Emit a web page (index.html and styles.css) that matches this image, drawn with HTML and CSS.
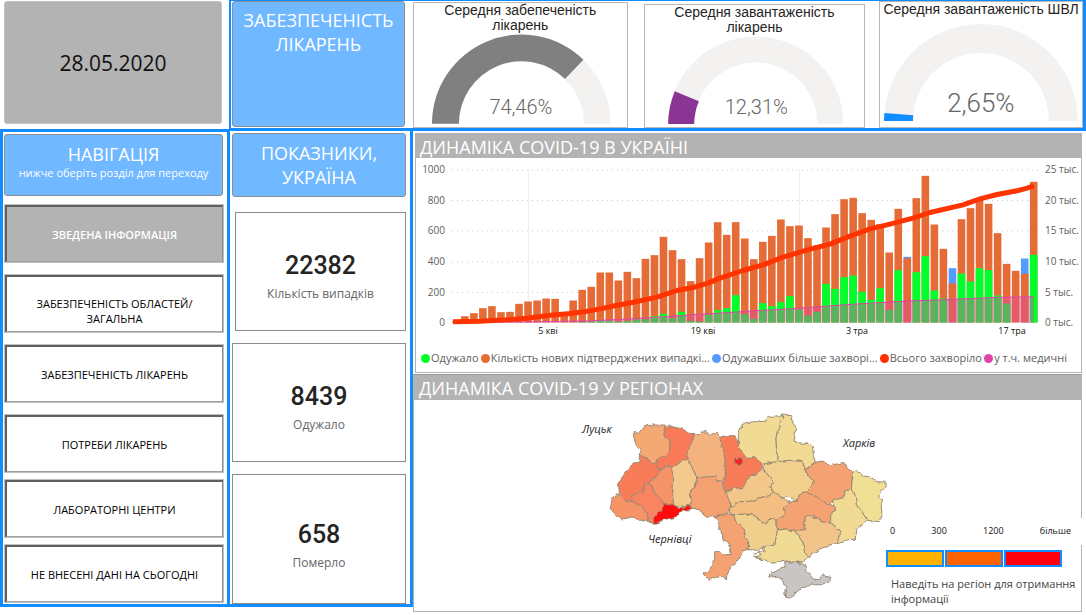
FILE: index.html
```html
<!DOCTYPE html>
<html lang="uk">
<head>
<meta charset="utf-8">
<title>COVID-19 в Україні</title>
<link rel="stylesheet" href="styles.css">
</head>
<body>
<div class="board">
  <div class="side">
    <div class="date">28.05.2020</div>
    <nav class="nav">
      <header class="tile nav-head">
        <h2>НАВІГАЦІЯ</h2>
        <p>нижче оберіть розділ для переходу</p>
      </header>
      <button class="nav-btn active">ЗВЕДЕНА ІНФОРМАЦІЯ</button>
      <button class="nav-btn two-line">ЗАБЕЗПЕЧЕНІСТЬ ОБЛАСТЕЙ/ ЗАГАЛЬНА</button>
      <button class="nav-btn">ЗАБЕЗПЕЧЕНІСТЬ ЛІКАРЕНЬ</button>
      <button class="nav-btn">ПОТРЕБИ ЛІКАРЕНЬ</button>
      <button class="nav-btn tight">ЛАБОРАТОРНІ ЦЕНТРИ</button>
      <button class="nav-btn tight">НЕ ВНЕСЕНІ ДАНІ НА СЬОГОДНІ</button>
    </nav>
  </div>

  <div class="content">
    <section class="supply">
      <h2 class="tile supply-head">ЗАБЕЗПЕЧЕНІСТЬ ЛІКАРЕНЬ</h2>
      <div class="gauges">
        <article class="gauge">
          <h3>Середня забепеченість лікарень</h3>
          <svg viewBox="0 0 213 90">
            <path class="g-track" d="M18 90A89.5 89.5 0 0 1 197 90H170A62.500 62.500 0 0 0 45 90Z"/>
            <path fill="#808080" d="M18 90A89.500 89.500 0 0 1 169.700 25.700L151.200 45.100A62.500 62.500 0 0 0 45 90Z"/>
            <text class="g-value" x="107" y="80">74,46%</text>
          </svg>
        </article>
        <article class="gauge gauge-mid">
          <h3>Середня завантаженість лікарень</h3>
          <svg viewBox="0 0 219 88">
            <path class="g-track" d="M23 88A87.500 87.500 0 0 1 198 88H172A61.500 61.500 0 0 0 49 88Z"/>
            <path fill="#8a3494" d="M23 88A87.500 87.500 0 0 1 29.700 55L53.700 65A61.500 61.500 0 0 0 49 88Z"/>
            <text class="g-value" x="111" y="78">12,31%</text>
          </svg>
        </article>
        <article class="gauge gauge-last">
          <h3>Середня завантаженість ШВЛ</h3>
          <svg viewBox="0 0 202 103">
            <path class="g-track" d="M4 97A97 97 0 0 1 198 97H169A68 68 0 0 0 33 97Z"/>
            <path fill="#118dff" d="M4 97A97 97 0 0 1 4.400 89L33.300 91.400A68 68 0 0 0 33 97Z"/>
            <text class="g-value big" x="101" y="88">2,65%</text>
          </svg>
        </article>
      </div>
    </section>

    <div class="lower">
      <section class="stats">
        <h2 class="tile stats-head">ПОКАЗНИКИ, УКРАЇНА</h2>
        <article class="stat first"><b>22382</b><span>Кількість випадків</span></article>
        <article class="stat"><b>8439</b><span>Одужало</span></article>
        <article class="stat last"><b>658</b><span>Померло</span></article>
      </section>

      <main class="main">
        <section class="panel dynamics">
          <h2>ДИНАМІКА COVID-19 В УКРАЇНІ</h2>
          <svg class="chart" viewBox="416 158 665 185">
            <g class="grid">
              <path d="M452 170H1038M452 200.500H1038M452 231H1038M452 262H1038M452 292.500H1038"/>
            </g>
            <path class="month" d="M528.500 169V322M799.500 169V322"/>
            <g id="bars"></g>
            <path id="area"/>
            <path id="medics"/>
            <path id="total"/>
            <g class="axis left">
              <text x="445" y="173">1000</text><text x="445" y="204">800</text><text x="445" y="234">600</text>
              <text x="445" y="265">400</text><text x="445" y="296">200</text><text x="445" y="326">0</text>
            </g>
            <g class="axis">
              <text x="1045" y="173">25 тыс.</text><text x="1045" y="204">20 тыс.</text><text x="1045" y="234">15 тыс.</text>
              <text x="1045" y="265">10 тыс.</text><text x="1045" y="296">5 тыс.</text><text x="1045" y="326">0 тыс.</text>
            </g>
            <g class="dates">
              <text x="548" y="334">5 кві</text><text x="703" y="334">19 кві</text>
              <text x="857" y="334">3 тра</text><text x="1012" y="334">17 тра</text>
            </g>
          </svg>
          <ul class="legend">
            <li class="k-green">Одужало</li>
            <li class="k-orange">Кількість нових підтверджених випадкі...</li>
            <li class="k-blue">Одужавших більше захворі...</li>
            <li class="k-red">Всього захворіло</li>
            <li class="k-pink">у т.ч. медичні</li>
          </ul>
        </section>

        <section class="panel regions">
          <h2>ДИНАМІКА COVID-19 У РЕГІОНАХ</h2>
          <svg class="map" viewBox="414 399 667 211">
            <defs>
              <filter id="rough" x="-5%" y="-5%" width="110%" height="110%">
                <feTurbulence type="fractalNoise" baseFrequency="0.16" numOctaves="2" seed="4"/>
                <feDisplacementMap in="SourceGraphic" scale="4" xChannelSelector="R" yChannelSelector="G"/>
              </filter>
            </defs>
            <g filter="url(#rough)">
              <g class="oblasts" transform="translate(600 400) scale(.3333)">
                <path fill="#f4a873" d="M100 94L118 97 136 74 168 72 193 72 198 74 190 88 193 104 203 112 210 128 210 145 202 162 188 166 170 178 168 190 150 184 138 170 118 162 120 148 106 128 102 110Z"/>
                <path fill="#f87a58" d="M198 74L245 83 268 98 284 97 278 118 268 135 264 160 264 174 245 180 230 193 216 196 200 196 178 210 172 205 168 190 170 178 188 166 202 162 210 145 210 128 203 112 193 104 190 88Z"/>
                <path fill="#f87c58" d="M118 164L138 170 150 184 168 190 172 205 178 212 165 232 154 238 148 248 132 250 132 274 118 276 98 284 96 302 74 296 58 278 56 244 80 210 104 185 118 184Z"/>
                <path fill="#f69468" d="M50 278L62 284 74 296 96 302 126 316 140 334 144 358 120 358 96 348 68 354 46 340 30 322 36 296Z"/>
                <path fill="#f98560" d="M148 248L156 256 164 276 178 290 194 308 190 322 178 334 162 346 160 370 148 358 144 358 140 334 126 316 96 302 98 284 118 276 132 274 132 250Z"/>
                <path fill="#f69468" d="M178 212L200 196 216 196 218 232 216 270 222 314 194 308 178 290 164 276 156 256 148 248 165 232Z"/>
                <path fill="#f3c98e" d="M216 196L230 193 245 180 264 174 272 190 284 216 290 232 286 258 272 268 272 312 240 320 222 314 216 270 218 232Z"/>
                <path fill="#f4b27f" d="M284 97L298 102 304 94 318 92 332 104 352 96 360 108 364 140 372 152 376 196 376 224 368 240 350 240 348 226 320 228 290 232 284 216 264 174 264 160 268 135 278 118Z"/>
                <path fill="#f5a070" d="M290 232L320 228 348 226 350 240 368 240 370 262 378 270 384 290 392 318 380 338 346 344 320 346 296 326 274 322 272 268 286 258Z"/>
                <path fill="#f87c58" d="M362 108L376 104 402 104 412 118 418 140 432 158 442 172 468 170 488 185 484 205 470 222 450 224 436 250 428 260 400 262 376 268 370 250 376 224 376 196 372 152 364 140Z"/>
                <path fill="#f0da94" d="M416 140L415 100 425 75 434 66 464 62 480 62 498 60 500 44 520 46 542 44 550 52 538 70 542 80 532 92 528 112 530 150 538 165 532 182 496 188 488 190 468 170 442 172 432 158Z"/>
                <path fill="#f0da94" d="M542 42L572 44 580 70 592 80 582 100 588 124 624 128 638 140 640 160 646 184 624 196 616 202 606 182 570 178 532 182 538 165 530 150 528 112 532 92 542 80 538 70 550 52Z"/>
                <path fill="#f0d08c" d="M496 188L532 182 570 178 606 182 616 202 624 222 640 240 636 254 620 272 598 282 592 302 572 290 546 290 520 272 512 258 518 240 504 222 488 200Z"/>
                <path fill="#f5a273" d="M616 202L646 184 668 180 690 194 732 184 742 202 758 214 754 266 736 270 732 290 700 298 690 314 676 310 660 290 640 284 620 272 636 254 640 240 624 222Z"/>
                <path fill="#f0e096" d="M760 214L768 208 790 226 804 226 830 242 856 244 854 262 840 274 836 290 850 294 844 316 846 334 838 362 802 358 786 332 772 318 770 290 754 266Z"/>
                <path fill="#f3c68a" d="M378 270L400 262 428 260 436 250 450 224 470 222 484 205 488 200 504 222 518 240 512 258 520 272 510 284 480 290 466 300 420 302 400 316 392 318 384 290Z"/>
                <path fill="#f4be82" d="M386 334L392 318 400 316 420 302 466 300 480 290 510 284 520 272 546 290 558 300 572 300 554 320 552 344 530 354 506 356 500 368 482 364 460 340 420 340 402 342Z"/>
                <path fill="#f5a273" d="M572 300L592 302 598 282 620 272 640 284 660 290 676 310 702 314 704 330 692 342 692 366 660 362 656 350 616 346 614 386 594 388 556 384 532 382 530 354 552 344 554 320Z"/>
                <path fill="#f0da94" d="M700 298L732 290 736 270 754 266 770 290 772 318 786 332 802 358 792 370 772 378 766 414 736 418 712 426 720 392 706 376 692 366 692 342 704 330 702 314Z"/>
                <path fill="#f3c48a" d="M616 346L656 350 660 362 692 366 706 376 720 392 712 426 682 434 656 446 640 458 626 466 614 456 608 424 596 406 584 390 614 386Z"/>
                <path fill="#f0da94" d="M532 388L556 384 584 390 596 406 608 424 614 456 626 466 608 482 580 484 552 478 528 486 484 474 460 468 484 464 474 454 496 452 486 440 500 434 524 432 528 410Z"/>
                <path fill="#f0cf8c" d="M402 342L420 340 460 340 482 364 500 368 506 356 530 354 532 388 528 410 524 432 486 438 478 448 444 446 446 420 432 408 434 386 406 360Z"/>
                <path fill="#f5a273" d="M340 346L380 338 402 342 406 360 434 386 432 408 446 420 444 446 426 450 412 480 392 502 380 518 380 536 368 526 342 530 328 538 310 520 326 512 344 476 344 452 362 452 370 462 394 460 388 428 372 420 370 396 356 386 358 362Z"/>
                <path fill="#c8c6c4" d="M554 482L610 486 620 510 640 534 658 536 670 522 692 526 688 542 660 552 636 546 610 562 590 570 572 592 548 580 558 564 552 540 536 526 506 528 514 516 536 506 556 496Z"/>
                <path fill="none" d="M548 566L560 572 556 584 566 588M592 486L602 492 608 486M460 460L480 456M466 470L490 476"/>
                <path fill="#ff0d0d" d="M190 308L214 312 224 314 240 320 250 318 272 312 274 326 244 328 236 336 222 350 190 356 162 370 160 352 178 334 190 322Z"/>
                <path fill="#f52020" d="M403 172L412 176 416 170 426 172 428 184 420 194 412 190 404 184Z"/>
              </g>
            </g>
            <g class="cities">
              <text x="582" y="432">Луцьк</text>
              <text x="843" y="446">Харків</text>
              <text x="648" y="542">Чернівці</text>
            </g>
          </svg>
          <aside class="scale">
            <div class="ticks"><span>0</span><span>300</span><span>1200</span><span>більше</span></div>
            <div class="swatches"><i class="low"></i><i class="mid"></i><i class="high"></i></div>
            <p>Наведіть на регіон для отримання інформації</p>
          </aside>
        </section>
      </main>
    </div>
  </div>
</div>
<script src="script.js"></script>
</body>
</html>
```
FILE: styles.css
```css
* { box-sizing: border-box; }
body {
  margin: 0;
  background: #fff;
  font-family: "Open Sans", "Noto Sans", sans-serif;
  color: #111;
}
h2, h3, p, ul { margin: 0; padding: 0; font-weight: 400; }
svg { display: block; width: 100%; }

.board { display: flex; min-height: 611px; }
.side { flex: 0 0 230px; display: flex; flex-direction: column; }
.content { flex: 1; min-width: 0; }

.date {
  height: 123px;
  margin: 1px 8px 5px 4px;
  border-radius: 3px;
  background: #b3b3b3;
  border: 1px solid #c4c4c4;
  display: flex;
  align-items: center;
  justify-content: center;
  font-size: 21px;
}

.tile {
  background: #70b8ff;
  border: 1px solid #8a8f98;
  border-radius: 3px;
  color: #fff;
  text-align: center;
  font-size: 18px;
  line-height: 24px;
}

.nav {
  height: 478px;
  border: 3px solid #118dff;
  padding: 2px 3px 0 1px;
  display: flex;
  flex-direction: column;
}
.nav-head { flex: none; height: 62px; margin: 0 1px 8px 0; padding-top: 7px; }
.nav-head h2 { font-size: 18px; line-height: 24px; }
.nav-head p { font-size: 11px; line-height: 14px; font-weight: 500; }
.nav-btn {
  flex: none;
  height: 59px;
  margin: 0 0 11px;
  padding: 0 20px;
  background: #fff;
  border: 3px solid #5f5f5f;
  border-width: 3px 2px 2px 3px;
  border-right-color: #8a8a8a;
  border-bottom-color: #a0a0a0;
  outline: 1px solid #c0c0c0;
  outline-offset: -1px;
  font: 11px/15px "Open Sans", "Noto Sans", sans-serif;
  color: #000;
}
.nav-btn.two-line { padding-top: 14px; }
.nav-btn.active { background: #b3b3b3; color: #fff; font-weight: 600; }
.nav-btn.tight { margin-top: -5px; }

.supply {
  display: flex;
  height: 131px;
  margin-left: -1px;
  border: 3px solid #118dff;
  border-top-width: 1px;
  border-left-width: 2px;
}
.supply-head { flex: 0 0 173px; height: 126px; padding: 6px 8px; margin-left: 1px; }
.gauges { flex: 1; display: flex; margin-left: 8px; }
.gauge {
  flex: 215 1 0;
  height: 126px;
  margin-top: 1px;
  border: 1px solid #b8b8b8;
  display: flex;
  flex-direction: column;
}
.gauge-mid { flex-grow: 222; margin: 3px 14px 0 16px; height: 124px; }
.gauge-last { flex-grow: 204; margin-top: 0; height: 127px; }
.gauge h3 {
  font: 14px/15px "Liberation Sans", Arial, sans-serif;
  color: #252423;
  text-align: center;
  padding: 0 24px;
}
.gauge-last h3 { padding: 0; }
.gauge svg { margin-top: auto; }
.gauge:first-child svg { margin-bottom: 3px; }
.gauge-mid svg { margin-bottom: 3px; }
.g-track { fill: #f3f2f1; }
.g-value {
  font: 300 20px Roboto, sans-serif;
  fill: #666;
  text-anchor: middle;
}
.g-value.big { font-size: 26px; }

.lower { display: flex; }
.stats {
  flex: 0 0 183px;
  height: 476px;
  border: 3px solid #118dff;
  border-width: 0 3px 3px 0;
  padding: 2px 4px 0 2px;
  display: flex;
  flex-direction: column;
}
.stats-head { height: 64px; padding: 7px 20px; }
.stat {
  height: 119px;
  margin-bottom: 12px;
  border: 1px solid #8c8c8c;
  display: flex;
  flex-direction: column;
  align-items: center;
  padding-top: 36px;
}
.stat.first { margin: 15px 0 12px 3px; }
.stat.last { flex: 1; margin-bottom: 0; padding-top: 43px; }
.stat b { font: 500 25px/34px Roboto, sans-serif; color: #252423; }
.stat span { font-size: 12px; line-height: 22px; color: #666; }

.main { flex: 1; min-width: 0; padding: 2px 4px 0 0; }
.panel { border: 1px solid #b3b3b3; position: relative; }
.panel h2 {
  height: 25px;
  padding-left: 5px;
  background: #b3b3b3;
  color: #fff;
  font-size: 18px;
  line-height: 26px;
}
.dynamics { margin: 0 0 1px 2px; padding-bottom: 5px; }
.dynamics h2 { height: 24px; padding-left: 4px; }
.regions { border-top-color: #999; }

.grid path { stroke: #c8c8c8; stroke-dasharray: 1 4; fill: none; }
.month { stroke: #f0f0f0; }
.axis text { font-size: 10px; fill: #605e5c; }
.axis.left text { text-anchor: end; }
.dates text { font-size: 9px; fill: #111; text-anchor: middle; font-weight: 500; }
#area { fill: #e044a7; opacity: .4; }
#medics { fill: none; stroke: #e044a7; }
#total { fill: none; stroke: #ff3300; stroke-width: 5; stroke-linejoin: round; }

.legend {
  display: flex;
  justify-content: space-between;
  list-style: none;
  padding: 6px 14px 0 5px;
  font-size: 11px;
  line-height: 18px;
  color: #605e5c;
  white-space: nowrap;
}
.legend li { display: flex; align-items: center; gap: 1px; }
.legend li::before {
  content: "";
  width: 9px;
  height: 9px;
  border-radius: 50%;
  background: currentColor;
}
.k-green::before { color: #00ff2b; }
.k-orange::before { color: #e66c37; }
.k-blue::before { color: #559bff; }
.k-red::before { color: #ff2d00; }
.k-pink::before { color: #e044a7; }

.oblasts path { stroke: #9a8a72; stroke-width: 3; stroke-linejoin: round; }
.cities text { font-size: 11px; font-style: italic; fill: #222; }

.scale { position: absolute; right: -5px; bottom: 0; width: 200px; }
.ticks {
  display: flex;
  justify-content: space-between;
  height: 27px;
  margin-bottom: 5px;
  padding: 0 15px 0 4px;
  background: #fff;
  font-size: 9px;
  line-height: 26px;
}
.swatches { display: flex; gap: 1px; }
.swatches i { width: 58px; height: 17px; border: 2px solid #118dff; }
.low { background: #ffb300; }
.mid { background: #ff6200; }
.high { background: #ff0010; }
.scale p { font-size: 11px; line-height: 15px; padding: 9px 8px 5px 5px; color: #444; }
```
FILE: script.js
```js
// Daily series, on a scale where 459 units equal 1000 cases.
const cases = [4,19,28,43,49,31,32,56,63,66,72,71,31,66,98,107,150,150,126,152,133,191,202,257,217,190,124,193,240,301,263,301,252,190,242,260,309,289,291,253,231,285,325,370,374,328,308,295,210,341,193,373,440,294,221,117,310,343,367,356,268,176,155,146,422];
const recovered = [0,0,0,0,0,0,0,0,0,0,0,0,0,0,2,3,6,6,3,5,9,10,19,26,13,32,5,3,24,37,43,82,25,11,58,49,61,79,39,21,32,116,101,136,141,92,68,103,38,157,0,151,199,96,72,0,147,123,163,157,81,57,0,0,203];
const excess = { 50: 197, 55: 163, 63: 192 };
// Cumulative curves as [x, height] pairs, height on the same scale.
const total = [[453,2],[480,4],[506,8],[527,13],[548,21],[570,27],[584,32],[600,41],[616,51],[632,60],[657,76],[677,96],[693,105],[708,118],[720,133],[743,156],[763,173],[783,196],[810,220],[830,235],[850,259],[870,281],[887,293],[913,313],[930,330],[963,353],[980,371],[997,384],[1017,395],[1027,403],[1034,410]];
const medics = [[453,1],[542,2],[590,5],[632,11],[687,22],[750,34],[804,44],[849,54],[903,64],[949,69],[1003,76],[1034,77]];

const BASE = 322.5, X0 = 452, STEP = 9.03, WIDTH = 7.6;
const y = v => BASE - v / 3;
const bars = document.getElementById('bars');

function bar(i, v, color) {
  if (!v) return;
  const r = document.createElementNS('http://www.w3.org/2000/svg', 'rect');
  r.setAttribute('x', X0 + i * STEP);
  r.setAttribute('y', y(v));
  r.setAttribute('width', WIDTH);
  r.setAttribute('height', v / 3);
  r.setAttribute('fill', color);
  bars.appendChild(r);
}
cases.forEach((v, i) => {
  bar(i, excess[i], '#559bff');
  bar(i, v, '#e66c37');
  bar(i, recovered[i], '#00ff2b');
});

const line = pts => 'M' + pts.map(([x, v]) => x + ' ' + y(v)).join('L');
document.getElementById('total').setAttribute('d', line(total));
document.getElementById('medics').setAttribute('d', line(medics));
document.getElementById('area').setAttribute('d', line(medics) + 'V' + BASE + 'H453Z');
```
